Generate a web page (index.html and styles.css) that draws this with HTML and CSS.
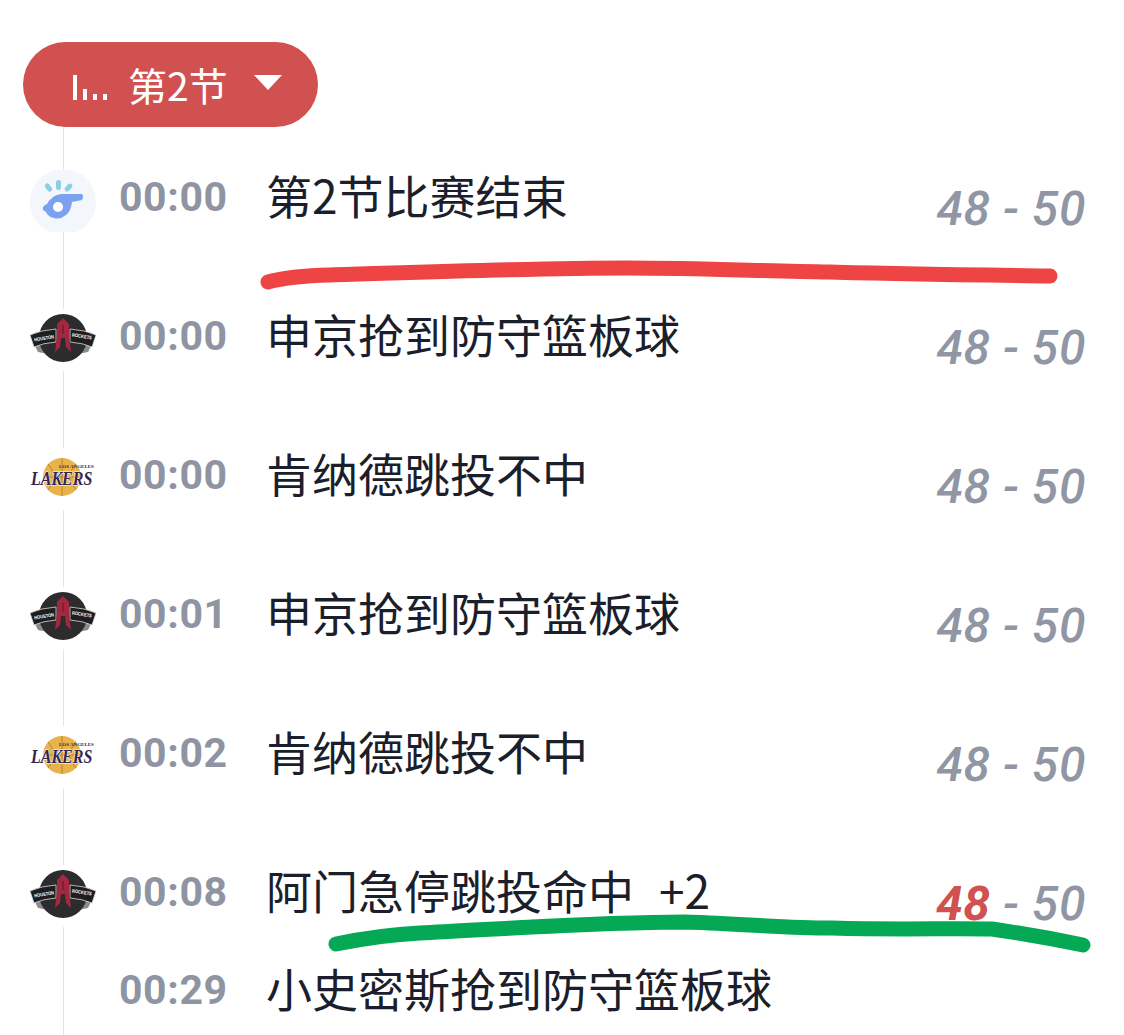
FILE: index.html
```html
<!DOCTYPE html>
<html lang="zh-CN">
  <head>
    <meta charset="UTF-8" />
    <title>文字直播</title>
    <link rel="stylesheet" href="styles.css">
  </head>
  <body>
    <div class="pill">
      <svg class="bars" width="36" height="26" viewBox="0 0 36 26">
        <rect x="0" y="1" width="4" height="25" fill="#fff"/>
        <rect x="10" y="15" width="4" height="11" fill="#fff"/>
        <rect x="20" y="20" width="4" height="6" fill="#fff"/>
        <rect x="30" y="20" width="4" height="6" fill="#fff"/>
      </svg>
      <span class="pill-label">第2节</span>
      <span class="caret"></span>
    </div>

    <div class="feed">
      <div class="row">
        <svg class="logo whistle" viewBox="0 0 66 62">
          <circle cx="33" cy="32" r="33" fill="#f3f7fc"/>
          <rect x="26" y="10" width="5" height="10" rx="2.5" fill="#8fcde0"/>
          <rect x="16" y="13" width="5" height="9" rx="2.5" fill="#8fcde0" transform="rotate(-40 18.5 17.5)"/>
          <rect x="36" y="13" width="5" height="9" rx="2.5" fill="#8fcde0" transform="rotate(45 38.5 17.5)"/>
          <path d="M22 28 Q26 24 33 24 L52 24 Q54 26 52 30 L42 32 Q41 41 36 45 Q30 50 24 48 Q18 47 16 42 L13 40 Q12 37 15 35 L17 34 Q18 31 22 28 Z" fill="#7ca2ef"/>
          <circle cx="28" cy="37" r="5" fill="#fff"/>
        </svg>
        <span class="time">00:00</span>
        <span class="text">第2节比赛结束</span>
        <span class="score">48 - 50</span>
      </div>
      <div class="row">
        <svg class="logo" viewBox="0 0 68 52">
          <path d="M3 26 L9 38 Q22 40 29 47 L39 47 Q46 40 59 38 L65 26 Z" fill="#8b8b8d"/>
          <circle cx="34" cy="24" r="24" fill="#2c2c2e"/>
          <path d="M1 21 Q12 16 27 15 L27 28 Q14 29 5 33 Z" fill="#1e1e20" stroke="#d8d8d8" stroke-width="0.8"/>
          <path d="M67 21 Q56 16 41 15 L41 28 Q54 29 63 33 Z" fill="#1e1e20" stroke="#d8d8d8" stroke-width="0.8"/>
          <text class="logo-small" x="5" y="26" textLength="20" lengthAdjust="spacingAndGlyphs" transform="rotate(-9 15 24)">HOUSTON</text>
          <text class="logo-small" x="43" y="24" textLength="20" lengthAdjust="spacingAndGlyphs" transform="rotate(9 53 22)">ROCKETS</text>
          <path d="M28 10 L34 4 L40 10 L40 22 L42 38 L37 33 L36 24 L32 24 L31 33 L26 38 L28 22 Z" fill="#a5263f"/>
          <path d="M33 11 H35 V20 H33 Z" fill="#7d2033"/>
        </svg>
        <span class="time">00:00</span>
        <span class="text">申京抢到防守篮板球</span>
        <span class="score">48 - 50</span>
      </div>
      <div class="row">
        <svg class="logo" viewBox="0 2 68 46">
          <circle cx="33" cy="23" r="19" fill="#e9b34c"/>
          <path d="M33 4 V42 M14 23 H52 M19 10 Q31 23 19 36 M47 10 Q35 23 47 36" fill="none" stroke="#b07f24" stroke-width="0.9"/>
          <text class="logo-tiny" x="30" y="14">LOS ANGELES</text>
          <text class="logo-lakers" transform="translate(2 31) scale(1 1.2)">LAKERS</text>
        </svg>
        <span class="time">00:00</span>
        <span class="text">肯纳德跳投不中</span>
        <span class="score">48 - 50</span>
      </div>
      <div class="row">
        <svg class="logo" viewBox="0 0 68 52">
          <path d="M3 26 L9 38 Q22 40 29 47 L39 47 Q46 40 59 38 L65 26 Z" fill="#8b8b8d"/>
          <circle cx="34" cy="24" r="24" fill="#2c2c2e"/>
          <path d="M1 21 Q12 16 27 15 L27 28 Q14 29 5 33 Z" fill="#1e1e20" stroke="#d8d8d8" stroke-width="0.8"/>
          <path d="M67 21 Q56 16 41 15 L41 28 Q54 29 63 33 Z" fill="#1e1e20" stroke="#d8d8d8" stroke-width="0.8"/>
          <text class="logo-small" x="5" y="26" textLength="20" lengthAdjust="spacingAndGlyphs" transform="rotate(-9 15 24)">HOUSTON</text>
          <text class="logo-small" x="43" y="24" textLength="20" lengthAdjust="spacingAndGlyphs" transform="rotate(9 53 22)">ROCKETS</text>
          <path d="M28 10 L34 4 L40 10 L40 22 L42 38 L37 33 L36 24 L32 24 L31 33 L26 38 L28 22 Z" fill="#a5263f"/>
          <path d="M33 11 H35 V20 H33 Z" fill="#7d2033"/>
        </svg>
        <span class="time">00:01</span>
        <span class="text">申京抢到防守篮板球</span>
        <span class="score">48 - 50</span>
      </div>
      <div class="row">
        <svg class="logo" viewBox="0 2 68 46">
          <circle cx="33" cy="23" r="19" fill="#e9b34c"/>
          <path d="M33 4 V42 M14 23 H52 M19 10 Q31 23 19 36 M47 10 Q35 23 47 36" fill="none" stroke="#b07f24" stroke-width="0.9"/>
          <text class="logo-tiny" x="30" y="14">LOS ANGELES</text>
          <text class="logo-lakers" transform="translate(2 31) scale(1 1.2)">LAKERS</text>
        </svg>
        <span class="time">00:02</span>
        <span class="text">肯纳德跳投不中</span>
        <span class="score">48 - 50</span>
      </div>
      <div class="row row-short">
        <svg class="logo" viewBox="0 0 68 52">
          <path d="M3 26 L9 38 Q22 40 29 47 L39 47 Q46 40 59 38 L65 26 Z" fill="#8b8b8d"/>
          <circle cx="34" cy="24" r="24" fill="#2c2c2e"/>
          <path d="M1 21 Q12 16 27 15 L27 28 Q14 29 5 33 Z" fill="#1e1e20" stroke="#d8d8d8" stroke-width="0.8"/>
          <path d="M67 21 Q56 16 41 15 L41 28 Q54 29 63 33 Z" fill="#1e1e20" stroke="#d8d8d8" stroke-width="0.8"/>
          <text class="logo-small" x="5" y="26" textLength="20" lengthAdjust="spacingAndGlyphs" transform="rotate(-9 15 24)">HOUSTON</text>
          <text class="logo-small" x="43" y="24" textLength="20" lengthAdjust="spacingAndGlyphs" transform="rotate(9 53 22)">ROCKETS</text>
          <path d="M28 10 L34 4 L40 10 L40 22 L42 38 L37 33 L36 24 L32 24 L31 33 L26 38 L28 22 Z" fill="#a5263f"/>
          <path d="M33 11 H35 V20 H33 Z" fill="#7d2033"/>
        </svg>
        <span class="time">00:08</span>
        <span class="text">阿门急停跳投命中<span class="pts">+2</span></span>
        <span class="score"><b class="hit">48</b> - 50</span>
      </div>
      <div class="row row-short">
        <span class="no-logo"></span>
        <span class="time">00:29</span>
        <span class="text">小史密斯抢到防守篮板球</span>
      </div>
    </div>

    <!-- marker strokes drawn over the screenshot -->
    <svg class="scribble" width="1124" height="1035" viewBox="0 0 1124 1035">
      <path d="M268 282 Q290 276 330 275 C430 272 540 268 626 268 C700 268 760 271 829 272 C900 274 980 275 1050 276" stroke="#ef4444"/>
      <path d="M336 944 Q380 935 420 933 C500 929 600 922 685 922 C730 923 780 928 832 928 C900 930 950 928 992 929 Q1040 936 1083 945" stroke="#05a854"/>
    </svg>
  </body>
</html>
```

FILE: styles.css
```css
html, body {
  margin: 0;
  height: 1035px;
  overflow: hidden;
  background-color: #fff;
}
body {
  position: relative;
  padding-top: 42px;
  box-sizing: border-box;
  font-family: "Noto Sans CJK SC", "Noto Sans", sans-serif;
  color: #1b1e2b;
}

.pill {
  display: flex;
  align-items: center;
  width: 295px;
  height: 85px;
  margin-left: 23px;
  padding-left: 50px;
  box-sizing: border-box;
  border-radius: 43px;
  background-color: #d0514f;
  color: #fff;
  position: relative;
  z-index: 1;
}
.bars {
  margin-top: 4px;
}
.pill-label {
  margin-left: 19px;
  font-size: 39px;
  line-height: 1;
}
.caret {
  margin-left: 26px;
  margin-top: -4px;
  border-left: 14px solid transparent;
  border-right: 14px solid transparent;
  border-top: 15px solid #fff;
}

.feed {
  position: relative;
  padding-top: 43px;
}
.feed::before {
  content: "";
  position: absolute;
  left: 63px;
  top: 0;
  bottom: -10px;
  width: 1px;
  background-color: #e4e5e8;
}
.row {
  display: grid;
  grid-template-columns: 80px 163px 1fr auto;
  align-items: start;
  height: 139px;
  padding-left: 23px;
  padding-right: 38px;
  position: relative;
}
.row-short {
  height: 98px;
}
.logo {
  display: block;
  width: 68px;
  height: 62px;
  margin-left: 6px;
  background-color: #fff;
}
.whistle {
  width: 66px;
  height: 62px;
  margin-left: 7px;
  background: none;
}
.logo-small {
  font-family: "Liberation Sans", sans-serif;
  font-size: 5px;
  font-weight: 700;
  fill: #fff;
}
.logo-tiny {
  font-family: "Liberation Serif", serif;
  font-size: 5px;
  font-weight: 700;
  fill: #33264f;
}
.logo-lakers {
  font-family: "Liberation Serif", serif;
  font-size: 16px;
  font-weight: 700;
  font-style: italic;
  fill: #33264f;
  stroke: #fff;
  stroke-width: 1;
  paint-order: stroke;
}
.time {
  padding-left: 16px;
  font-family: Roboto, sans-serif;
  font-size: 41px;
  font-weight: 700;
  letter-spacing: 0.6px;
  line-height: 55px;
  color: #8f94a3;
}
.text {
  margin-top: -3px;
  font-size: 46px;
  line-height: 55px;
  white-space: nowrap;
}
.pts {
  margin-left: 25px;
}
.score {
  margin-top: 11px;
  font-family: Roboto, sans-serif;
  font-size: 48px;
  font-style: italic;
  font-weight: 500;
  letter-spacing: 0.6px;
  line-height: 55px;
  color: #9196a5;
}
.hit {
  font-weight: 700;
  color: #d0514f;
}

.scribble {
  position: absolute;
  left: 0;
  top: 0;
  pointer-events: none;
}
.scribble path {
  fill: none;
  stroke-width: 15;
  stroke-linecap: round;
  stroke-linejoin: round;
}
```
